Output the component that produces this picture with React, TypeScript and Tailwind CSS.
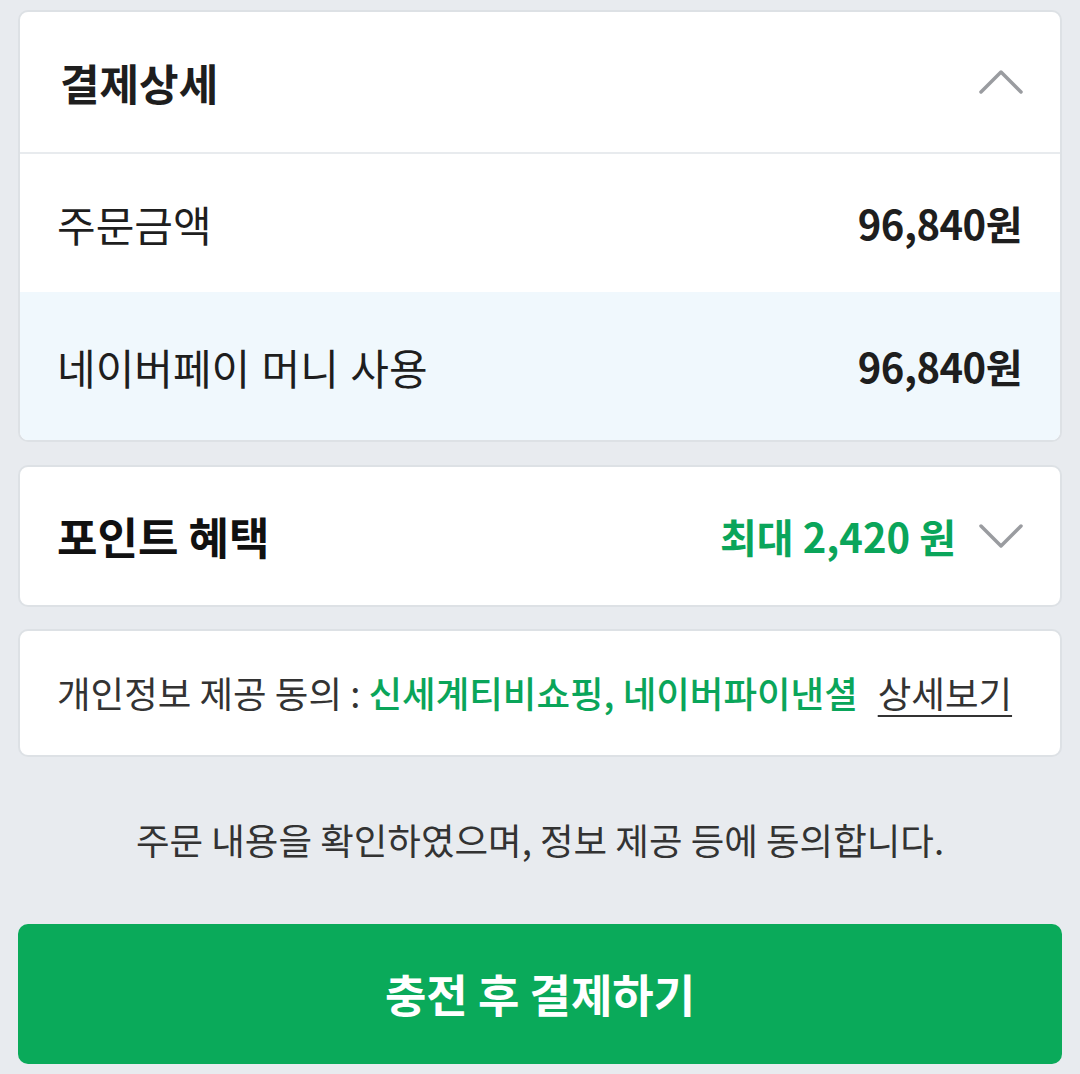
import React from "react";

const font = { fontFamily: '"Noto Sans CJK KR", "Noto Sans", sans-serif' };

function ChevronUp() {
  return (
    <svg width="46" height="28" viewBox="0 0 46 28" fill="none">
      <path d="M3 24 L23 4 L43 24" stroke="#9a9ca0" strokeWidth="3.5" strokeLinecap="round" strokeLinejoin="round" />
    </svg>
  );
}
function ChevronDown() {
  return (
    <svg width="46" height="28" viewBox="0 0 46 28" fill="none">
      <path d="M3 4 L23 24 L43 4" stroke="#9a9ca0" strokeWidth="3.5" strokeLinecap="round" strokeLinejoin="round" />
    </svg>
  );
}

export default function App() {
  return (
    <div style={font} className="w-[1080px] h-[1074px] bg-[#e8ebef] px-[18px] pt-[10px] flex flex-col overflow-hidden">
      <div className="rounded-[10px] border-2 border-[#dde1e5] bg-white overflow-hidden">
        <div className="h-[142px] flex items-center justify-between pl-[40px] pr-[36px] border-b-2 border-[#e8ebee]">
          <span className="text-[43px] font-bold text-[#1e1e1e]">결제상세</span>
          <ChevronUp />
        </div>
        <div className="h-[138px] flex items-center justify-between pl-[37px] pr-[38px]">
          <span className="text-[42px] text-[#1e1e1e]">주문금액</span>
          <span className="text-[40px] font-bold text-[#1e1e1e] tracking-[-0.5px]">96,840원</span>
        </div>
        <div className="h-[148px] flex items-center justify-between pl-[37px] pr-[38px] bg-[#f0f8fd]">
          <span className="text-[42px] text-[#1e1e1e] [word-spacing:2px]">네이버페이 머니 사용</span>
          <span className="text-[40px] font-bold text-[#1e1e1e] tracking-[-0.5px]">96,840원</span>
        </div>
      </div>

      <div className="mt-[23px] h-[142px] rounded-[10px] border-2 border-[#dde1e5] bg-white flex items-center justify-between pl-[37px] pr-[36px]">
        <span className="text-[44px] font-bold text-[#111]">포인트 혜택</span>
        <div className="flex items-center gap-[22px]">
          <span className="text-[40px] font-bold text-[#0aa55a]">최대 2,420 원</span>
          <ChevronDown />
        </div>
      </div>

      <div className="mt-[22px] h-[128px] rounded-[10px] border-2 border-[#dde1e5] bg-white flex items-center pl-[37px]">
        <span className="text-[36.5px] text-[#333] whitespace-nowrap">
          개인정보 제공 동의 : <span className="text-[#0aa55a] font-medium">신세계티비쇼핑, 네이버파이낸셜</span>
          <span className="ml-[20px] underline underline-offset-[7px] decoration-2">상세보기</span>
        </span>
      </div>

      <div className="h-[167px] flex items-center justify-center">
        <span className="text-[36.5px] text-[#333] whitespace-nowrap">주문 내용을 확인하였으며, 정보 제공 등에 동의합니다.</span>
      </div>

      <button className="h-[140px] w-full rounded-[10px] bg-[#0aaa5a] flex items-center justify-center">
        <span className="text-[45px] font-bold text-white">충전 후 결제하기</span>
      </button>
    </div>
  );
}
